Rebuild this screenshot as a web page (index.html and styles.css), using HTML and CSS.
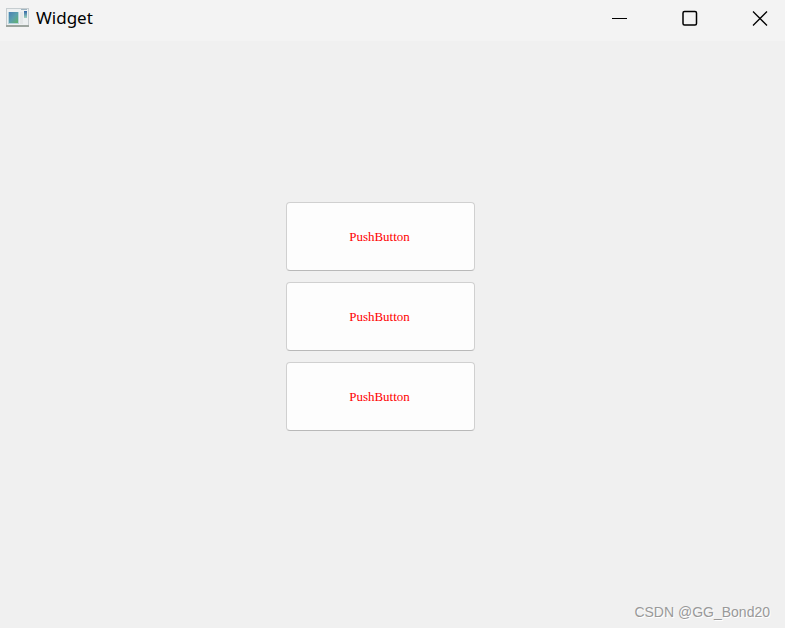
FILE: index.html
```html
<!DOCTYPE html>
<html lang="en">
<head>
    <meta charset="UTF-8">
    <meta name="viewport" content="width=device-width, initial-scale=1.0">
    <title>Widget</title>
    <link rel="stylesheet" href="styles.css">
</head>
<body>

    <header class="title-bar">
        <svg class="app-icon" width="24" height="20" viewBox="0 0 24 20" aria-hidden="true">
            <defs>
                <linearGradient id="pane" x1="0" y1="0" x2="1" y2="1">
                    <stop offset="0" stop-color="#4a80b4"/>
                    <stop offset="0.5" stop-color="#5b9fae"/>
                    <stop offset="1" stop-color="#62b368"/>
                </linearGradient>
                <linearGradient id="strip" x1="0" y1="0" x2="0" y2="1">
                    <stop offset="0" stop-color="#2f65a8"/>
                    <stop offset="1" stop-color="#9fd3bc"/>
                </linearGradient>
            </defs>
            <rect x="0" y="0" width="23" height="19" fill="#c6cdd0"/>
            <rect x="1" y="1" width="21" height="16" fill="#edf0f1"/>
            <rect x="0" y="17" width="23" height="2" fill="#9da59f"/>
            <rect x="2" y="4" width="11" height="12" fill="#b5d4dc"/>
            <rect x="3" y="4" width="9" height="11" fill="url(#pane)"/>
            <rect x="14" y="4" width="3" height="12" fill="#e4e7e8"/>
            <rect x="18" y="3" width="3" height="7" fill="url(#strip)"/>
            <rect x="15" y="1" width="6" height="1" fill="#9fb4c0"/>
        </svg>
        <h1 class="window-title">Widget</h1>
        <div class="window-controls">
            <button class="window-button" type="button" aria-label="Minimize">
                <svg width="16" height="16" viewBox="0 0 16 16"><path d="M0 8.5H15" stroke="#000" fill="none"/></svg>
            </button>
            <button class="window-button" type="button" aria-label="Maximize">
                <svg width="16" height="16" viewBox="0 0 16 16"><rect x="1" y="1.5" width="13.5" height="13.5" rx="1.5" stroke="#000" stroke-width="1.5" fill="none"/></svg>
            </button>
            <button class="window-button" type="button" aria-label="Close">
                <svg width="16" height="16" viewBox="0 0 16 16"><path d="M1 1.5L15 15.5M15 1.5L1 15.5" stroke="#000" stroke-width="1.3" fill="none"/></svg>
            </button>
        </div>
    </header>

    <main class="content">
        <button class="push-button" type="button">PushButton</button>
        <button class="push-button" type="button">PushButton</button>
        <button class="push-button" type="button">PushButton</button>
    </main>

    <footer class="watermark">CSDN @GG_Bond20</footer>

</body>
</html>
```
FILE: styles.css
```css
body {
    display: flex;
    flex-direction: column;
    min-height: 100vh;
    margin: 0;
    background-color: #f0f0f0;
    font-family: "Open Sans", "Noto Sans", sans-serif;
    color: #000;
}

/* Title bar */
.title-bar {
    display: flex;
    align-items: center;
    box-sizing: border-box;
    height: 41px;
    padding: 0 0 5px 6px;
    background-color: #f3f3f3;
}

.app-icon {
    flex: none;
}

.window-title {
    margin: 0 0 0 6px;
    font-family: "Noto Sans", "Open Sans", sans-serif;
    font-size: 17px;
    font-weight: normal;
    line-height: 24px;
}

.window-controls {
    display: flex;
    margin-left: auto;
}

.window-button {
    display: flex;
    align-items: center;
    justify-content: center;
    width: 70px;
    height: 36px;
    padding: 0 0 0 20px;
    border: none;
    background: none;
}

/* Buttons */
.content {
    display: flex;
    flex: 1;
    flex-direction: column;
    align-items: center;
    justify-content: center;
    gap: 11px;
    padding: 0 24px 10px 0;
}

.push-button {
    width: 189px;
    height: 69px;
    padding: 0 2px 0 0;
    border: 1px solid #d0d0d0;
    border-bottom-color: #b9b9b9;
    border-radius: 4px;
    background-color: #fdfdfd;
    color: #f00;
    font-family: "Liberation Serif", serif;
    font-size: 13px;
}

.watermark {
    padding: 0 15px 6px;
    font-family: "Liberation Sans", Arial, sans-serif;
    font-size: 14px;
    line-height: 20px;
    text-align: right;
    color: #999;
    text-shadow: 1px 1px 0 #fff;
}
```
